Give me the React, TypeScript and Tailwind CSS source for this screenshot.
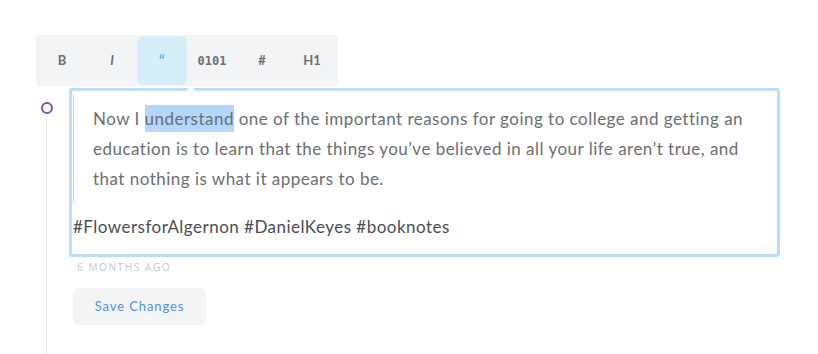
import React from "react";

const tools = [
  { label: "B", cls: "" },
  { label: "I", cls: "italic" },
  { label: "“", cls: "bg-[#d6eefa] !text-[#5bb8ea] text-[15px]" },
  { label: "0101", cls: "font-['DejaVu_Sans_Mono',monospace] !text-[12px]" },
  { label: "#", cls: "" },
  { label: "H1", cls: "" },
];

const App = () => {
  return (
    <div className="w-[818px] h-[354px] bg-white overflow-hidden font-['Lato',sans-serif]">
      <div className="pt-[35px] pl-[36px]">
        <div className="flex w-[302px] h-[51px] rounded bg-[#f3f4f6] p-px">
          {tools.map((t) => (
            <div
              key={t.label}
              className={`w-[50px] h-[49px] flex items-center justify-center rounded-md text-[13px] font-bold text-[#6b6f76] ${t.cls}`}
            >
              {t.label}
            </div>
          ))}
        </div>
      </div>

      <div className="flex">
        {/* timeline */}
        <div className="relative w-[69px] shrink-0">
          <div className="absolute left-[41px] top-[16px] w-[12px] h-[12px] rounded-full border-2 border-[#8450b0] bg-white" />
          <div className="absolute left-[46px] top-[29px] w-px h-[300px] bg-[#e6e6e6]" />
        </div>

        <div className="flex-1 pr-[38px]">
          <div className="relative mt-[2px] w-[711px] h-[169px] rounded-[3px] border-[3px] border-[#bcdcf8] pl-[1px] tracking-[0.03em]">
            <div className="absolute left-[114px] -top-[5px] w-0 h-0 border-x-[5px] border-x-transparent border-b-[5px] border-b-white" />
            <blockquote className="mt-[3px] border-l border-[#d6d6d6] pl-[19px] pr-[30px] pt-[10px] pb-[9px] text-[17px] leading-[30px] text-[#6d6e71]">
              Now I <span className="bg-[#b3d6fb] py-[3px]">understand</span> one of the important reasons for going to college and getting an education is to learn that the things you’ve believed in all your life aren’t true, and that nothing is what it appears to be.
            </blockquote>
            <p className="mt-[11px] text-[17px] text-[#4c4d52]">
              #FlowersforAlgernon #DanielKeyes #booknotes
            </p>
          </div>

          <div className="pl-[8px] mt-[3px] text-[10px] tracking-[0.16em] text-[#c5c8cc] font-['Open_Sans',sans-serif]">
            6 MONTHS AGO
          </div>

          <button className="mt-[13px] ml-[4px] w-[133px] h-[37px] rounded-md bg-[#f3f4f6] text-[13px] tracking-[0.07em] text-[#4e93e6]">
            Save Changes
          </button>
        </div>
      </div>
    </div>
  );
};

export default App;
